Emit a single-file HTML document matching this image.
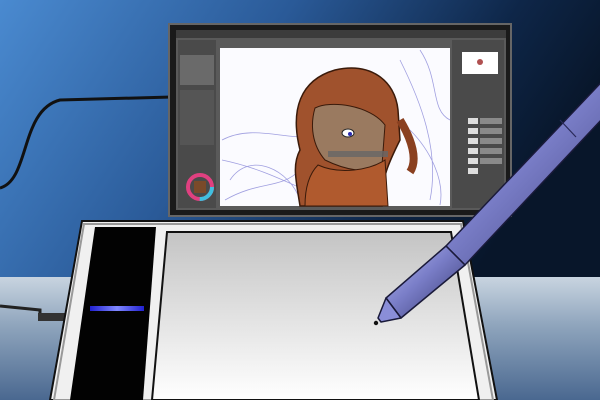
<!DOCTYPE html>
<html><head><style>
html,body{margin:0;padding:0;width:600px;height:400px;overflow:hidden}
</style></head><body>
<svg width="600" height="400" viewBox="0 0 600 400" xmlns="http://www.w3.org/2000/svg">
<defs>
<linearGradient id="bg" x1="0" y1="0" x2="1" y2="0.3">
<stop offset="0" stop-color="#4a8ad0"/><stop offset="0.45" stop-color="#2a5a98"/><stop offset="0.8" stop-color="#0e2648"/><stop offset="1" stop-color="#08162a"/>
</linearGradient>
<linearGradient id="desk" x1="0" y1="0" x2="0" y2="1">
<stop offset="0" stop-color="#c8d4e0"/><stop offset="0.4" stop-color="#8ea4bc"/><stop offset="1" stop-color="#4a6890"/>
</linearGradient>
<linearGradient id="pad" x1="0" y1="0" x2="0" y2="1">
<stop offset="0" stop-color="#c4c4c4"/><stop offset="1" stop-color="#ffffff"/>
</linearGradient>
<linearGradient id="pen" x1="0" y1="0" x2="1" y2="1">
<stop offset="0" stop-color="#b8bcf2"/><stop offset="0.45" stop-color="#7a7ec8"/><stop offset="1" stop-color="#34366e"/>
</linearGradient>
<linearGradient id="blue" x1="0" y1="0" x2="1" y2="0">
<stop offset="0" stop-color="#2020d0"/><stop offset="0.5" stop-color="#8088ff"/><stop offset="1" stop-color="#2020d0"/>
</linearGradient>
</defs>
<rect width="600" height="278" fill="url(#bg)"/>
<rect y="277" width="600" height="123" fill="url(#desk)"/>
<path d="M0 188 C30 180 20 110 60 100 L172 97" stroke="#111" stroke-width="3" fill="none"/>
<path d="M0 306 L40 310 L40 318 L70 318" stroke="#222" stroke-width="3" fill="none"/>
<rect x="38" y="313" width="30" height="8" fill="#333"/>
<rect x="169" y="24" width="342" height="192" fill="#1a1a1a" stroke="#666" stroke-width="2"/>
<rect x="176" y="30" width="330" height="180" fill="#5a5a5a"/>
<rect x="176" y="30" width="330" height="8" fill="#3c3c3c"/>
<rect x="178" y="40" width="38" height="168" fill="#4a4a4a"/>
<rect x="180" y="55" width="34" height="30" fill="#6a6a6a"/>
<rect x="180" y="90" width="34" height="55" fill="#555"/>
<circle cx="200" cy="187" r="12" fill="none" stroke="#e04080" stroke-width="4"/>
<circle cx="200" cy="187" r="12" fill="none" stroke="#40c0e0" stroke-width="4" stroke-dasharray="19 57"/>
<rect x="194" y="181" width="12" height="12" fill="#7a4a2a"/>
<rect x="220" y="48" width="230" height="158" fill="#fbfbff"/>
<g stroke="#8a88d8" stroke-width="0.8" fill="none" opacity="0.8">
<path d="M222 140 C260 120 300 150 340 130 M222 160 C270 170 300 190 330 200 M230 180 C250 150 290 170 300 200 M400 60 C420 100 440 150 430 200 M410 130 C430 150 445 180 440 205 M420 50 C440 80 430 110 450 120 M225 200 C260 180 280 190 300 170"/>
</g>
<path d="M300 150 C290 110 300 80 335 70 C370 62 395 80 398 110 L400 140 C390 160 380 180 382 206 L300 206 C296 180 292 165 300 150Z" fill="#a0522d" stroke="#3a1a0a" stroke-width="1.5"/>
<path d="M315 108 C330 100 370 105 385 125 L382 165 C370 175 345 170 325 160 C312 145 310 125 315 108Z" fill="#9a7a60" stroke="#3a1a0a"/>
<path d="M318 165 C340 175 370 170 385 160 L388 206 L305 206 C305 190 308 175 318 165Z" fill="#b05a2e" stroke="#3a1a0a"/>
<path d="M400 120 C412 140 418 160 410 172" stroke="#8a4020" stroke-width="8" fill="none"/>
<ellipse cx="348" cy="133" rx="6" ry="4" fill="#fff" stroke="#222"/><circle cx="350" cy="134" r="2" fill="#2a2ab0"/>
<rect x="328" y="151" width="60" height="6" fill="#666" opacity="0.8"/>
<rect x="452" y="40" width="52" height="168" fill="#4a4a4a"/>
<rect x="462" y="52" width="36" height="22" fill="#fff"/>
<circle cx="480" cy="62" r="3" fill="#b05050"/>
<g fill="#ddd"><rect x="468" y="118" width="10" height="6"/><rect x="468" y="128" width="10" height="6"/><rect x="468" y="138" width="10" height="6"/><rect x="468" y="148" width="10" height="6"/><rect x="468" y="158" width="10" height="6"/><rect x="468" y="168" width="10" height="6"/></g>
<g fill="#8a8a8a"><rect x="480" y="118" width="22" height="6"/><rect x="480" y="128" width="22" height="6"/><rect x="480" y="138" width="22" height="6"/><rect x="480" y="148" width="22" height="6"/><rect x="480" y="158" width="22" height="6"/></g>
<path d="M82 221 L463 221 L497 400 L50 400Z" fill="#f0f0f0" stroke="#111" stroke-width="2"/>
<path d="M84 224 L461 224 L493 400 L54 400Z" fill="none" stroke="#999" stroke-width="2"/>
<path d="M95 227 L156 227 L143 400 L70 400Z" fill="#020202"/>
<rect x="90" y="306" width="54" height="5" fill="url(#blue)"/>
<path d="M167 232 L451 232 L479 400 L152 400Z" fill="url(#pad)" stroke="#111" stroke-width="2"/>
<!-- pen -->
<g stroke="#1a1a3a" stroke-width="1.5" stroke-linejoin="round">
<path d="M631 51 L649 69 L465 265 L446 246Z" fill="url(#pen)"/>
<path d="M446 246 L465 265 L401 318 L386 298Z" fill="url(#pen)"/>
<path d="M386 298 L401 318 L381 322 L378 318Z" fill="#8a8ed8"/>
</g>
<circle cx="376" cy="323" r="2.2" fill="#111"/>
<path d="M560 120 L576 137" stroke="#2a2a5a" stroke-width="1.2"/>
</svg>
</body></html>
